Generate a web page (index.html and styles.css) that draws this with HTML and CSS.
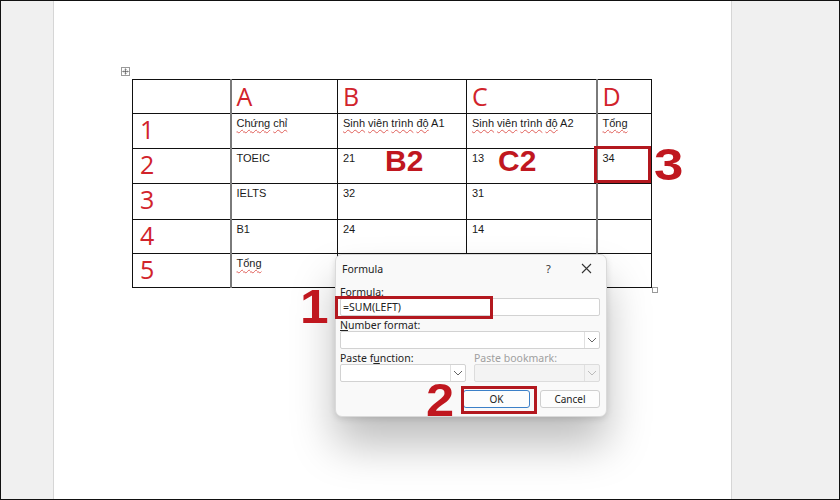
FILE: index.html
```html
<!DOCTYPE html>
<html>
<head>
<meta charset="utf-8">
<link rel="stylesheet" href="styles.css">
</head>
<body>
<div class="frame">
  <div class="gutter"></div>
  <div class="page">
    <div class="table-wrap">
      <span class="move-handle">
        <svg width="9" height="9" viewBox="0 0 9 9"><rect x="0.5" y="0.5" width="8" height="8" fill="#fff" stroke="#9a9a9a"/><path d="M4.5 1.8v5.4M1.8 4.5h5.4M3.6 2.7l0.9-0.9 0.9 0.9M3.6 6.3l0.9 0.9 0.9-0.9M2.7 3.6l-0.9 0.9 0.9 0.9M6.3 3.6l0.9 0.9-0.9 0.9" stroke="#555" stroke-width="0.7" fill="none"/></svg>
      </span>
      <table class="grid">
        <colgroup>
          <col class="c0"><col class="c1"><col class="c2"><col class="c3"><col class="c4">
        </colgroup>
        <tr class="r0"><td></td><td class="gray-left"><span class="big">A</span></td><td><span class="big">B</span></td><td><span class="big">C</span></td><td class="gray-left"><span class="big">D</span></td></tr>
        <tr class="r1"><td><span class="num">1</span></td><td class="gray-left"><span class="sq">Chứng</span> <span class="sq">chỉ</span></td><td><span class="sq">Sinh</span> <span class="sq">viên</span> <span class="sq">trình</span> <span class="sq">độ</span> A1</td><td><span class="sq">Sinh</span> <span class="sq">viên</span> <span class="sq">trình</span> <span class="sq">độ</span> A2</td><td class="gray-left"><span class="sq">Tổng</span></td></tr>
        <tr class="r2"><td><span class="num">2</span></td><td class="gray-left">TOEIC</td><td>21</td><td>13</td><td class="gray-left">34</td></tr>
        <tr class="r3"><td><span class="num">3</span></td><td class="gray-left">IELTS</td><td>32</td><td>31</td><td class="gray-left"></td></tr>
        <tr class="r4"><td><span class="num">4</span></td><td class="gray-left">B1</td><td>24</td><td>14</td><td class="gray-left"></td></tr>
        <tr class="r5"><td><span class="num">5</span></td><td class="gray-left"><span class="sq">Tổng</span></td><td></td><td></td><td class="gray-left"></td></tr>
      </table>
      <span class="resize-handle"></span>
    </div>
  </div>
  <div class="gutter right"></div>

  <div class="dialog">
    <div class="dlg-title">
      <span class="dlg-name">Formula</span>
      <span class="dlg-help">?</span>
      <span class="dlg-close">
        <svg width="11" height="11" viewBox="0 0 11 11"><path d="M1 1L10 10M10 1L1 10" stroke="#333" stroke-width="1.1"/></svg>
      </span>
    </div>
    <div class="dlg-body">
      <label class="lbl"><u>F</u>ormula:</label>
      <div class="field">=SUM(LEFT)</div>
      <label class="lbl"><u>N</u>umber format:</label>
      <div class="field select">
        <span class="chev"><svg width="10" height="6" viewBox="0 0 10 6"><path d="M1 1l4 4 4-4" stroke="#666" fill="none"/></svg></span>
      </div>
      <div class="two">
        <div class="col">
          <label class="lbl">Paste f<u>u</u>nction:</label>
          <div class="field select">
            <span class="chev"><svg width="10" height="6" viewBox="0 0 10 6"><path d="M1 1l4 4 4-4" stroke="#666" fill="none"/></svg></span>
          </div>
        </div>
        <div class="col">
          <label class="lbl dis">Paste bookmark:</label>
          <div class="field select disabled">
            <span class="chev"><svg width="10" height="6" viewBox="0 0 10 6"><path d="M1 1l4 4 4-4" stroke="#bbb" fill="none"/></svg></span>
          </div>
        </div>
      </div>
      <div class="buttons">
        <button class="btn primary">OK</button>
        <button class="btn">Cancel</button>
      </div>
    </div>
  </div>

  <span class="note note-b2">B2</span>
  <span class="note note-c2">C2</span>
  <span class="note note-3">3</span>
  <span class="note note-1">1</span>
  <span class="note note-2">2</span>
  <span class="redbox box-cell"></span>
  <span class="redbox box-formula"></span>
  <span class="redbox box-ok"></span>
</div>
</body>
</html>
```
FILE: styles.css
```css
* { box-sizing: border-box; }
html, body { margin: 0; padding: 0; }
body { width: 840px; height: 500px; overflow: hidden; font-family: "Liberation Sans", Arial, sans-serif; }

.frame {
  position: relative;
  width: 840px;
  height: 500px;
  display: flex;
  background: #f0f0f0;
}
.frame::after {
  content: "";
  position: absolute;
  inset: 0;
  border: 1px solid #111;
  pointer-events: none;
}
.gutter { width: 53px; background: #f0f0f0; }
.gutter.right { flex: 1; }
.page {
  width: 679px;
  background: #fff;
  border-left: 1px solid #d6d6d6;
  border-right: 1px solid #d6d6d6;
  padding: 79px 0 0 78px;
}

.table-wrap { position: relative; width: 520px; }
.move-handle { position: absolute; left: -11px; top: -12px; line-height: 0; }
.resize-handle {
  position: absolute; right: -6px; bottom: -5px;
  width: 6px; height: 6px; border: 1px solid #9a9a9a; background: #fff;
}

.grid {
  border-collapse: collapse;
  table-layout: fixed;
  width: 520px;
  font-size: 11px;
  color: #1a1a1a;
}
.c0 { width: 98px; } .c1 { width: 107px; } .c2 { width: 129px; } .c3 { width: 130px; } .c4 { width: 55px; }
.grid td {
  border: 1px solid #111;
  vertical-align: top;
  padding: 3px 5px 0 5px;
  line-height: 13px;
  white-space: nowrap;
}
.grid td.gray-left { border-left: 2px solid #7a7a7a; }
.r0 td { height: 34px; }
.r1 td { height: 35px; }
.r2 td { height: 35px; }
.r3 td { height: 36px; }
.r4 td { height: 34px; }
.r5 td { height: 34px; }

.big, .num {
  display: block;
  color: #d1232b;
  font-family: "Open Sans", "Liberation Sans", sans-serif;
  font-size: 25px;
  line-height: 26px;
}
.num { margin-top: -1px; margin-left: 2px; }
.sq { text-decoration: underline wavy #e0605a; text-decoration-thickness: 1px; text-underline-offset: 2px; }

.note {
  position: absolute;
  color: #c0171f;
  font-family: "Liberation Sans", Arial, sans-serif;
  font-weight: bold;
  line-height: 1;
  transform-origin: left top;
}
.note-b2 { left: 385px; top: 146px; font-size: 30px; }
.note-c2 { left: 498px; top: 146px; font-size: 30px; }
.note-3  { left: 654px; top: 143px; font-size: 44px; transform: scaleX(1.2); }
.note-1  { left: 300px; top: 282px; font-size: 49px; transform: scaleX(1.05); }
.note-2  { left: 426px; top: 377px; font-size: 46px; transform: scaleX(1.1); }

.redbox { position: absolute; border: 3px solid #b3181f; }
.box-cell { left: 594px; top: 146px; width: 57px; height: 37px; }
.box-formula { left: 335px; top: 296px; width: 158px; height: 23px; }
.box-ok { left: 461px; top: 386px; width: 76px; height: 28px; }

.dialog {
  position: absolute;
  left: 335px; top: 254px;
  width: 272px; height: 163px;
  background: #f9f9f9;
  border: 1px solid #dadada;
  border-radius: 7px;
  box-shadow: 0 28px 44px rgba(0,0,0,0.26), 0 2px 6px rgba(0,0,0,0.12);
  font-family: "Noto Sans", "Open Sans", sans-serif;
  font-size: 10px;
  color: #222;
}
.dlg-title {
  display: flex; align-items: center;
  height: 27px;
  padding: 0 0 0 6px;
}
.dlg-name { flex: 1; font-size: 10.5px; }
.dlg-help { width: 35px; font-size: 11px; color: #333; }
.dlg-close { width: 25px; line-height: 0; }
.dlg-body { padding: 4px 6px 0 4px; display: flex; flex-direction: column; }
.lbl { display: block; height: 12px; line-height: 12px; font-size: 10.5px; color: #222; }
.lbl.dis { color: #a0a0a0; }
.field {
  position: relative;
  height: 18px;
  background: #fff;
  border: 1px solid #d2d2d2;
  border-radius: 2px;
  margin: 0 0 3px;
  padding: 0 2px;
  line-height: 16px;
  font-size: 10.5px;
}
.field.disabled { background: #f3f3f3; border-color: #dcdcdc; }
.chev {
  position: absolute; right: 0; top: 0; bottom: 0; width: 15px;
  border-left: 1px solid #e0e0e0;
  display: flex; align-items: center; justify-content: center;
}
.two { display: flex; gap: 8px; }
.two .col { flex: 1; }
.buttons { display: flex; justify-content: flex-end; gap: 10px; margin-top: 5px; }
.btn {
  font-family: "Noto Sans", "Open Sans", sans-serif;
  font-size: 10px;
  height: 18px;
  width: 60px;
  background: #fdfdfd;
  border: 1px solid #cfcfcf;
  border-radius: 3px;
  color: #222;
  padding: 0;
}
.btn.primary { width: 67px; border: 1px solid #3c80c8; }
```
